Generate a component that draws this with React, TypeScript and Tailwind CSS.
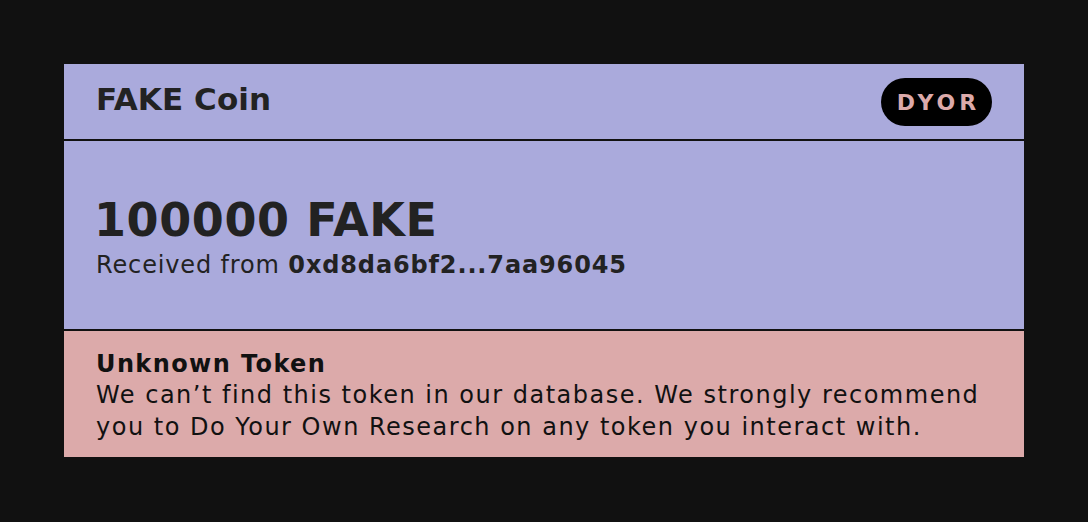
import React from "react";

const font = { fontFamily: "'DejaVu Sans', sans-serif" };

export default function App() {
  return (
    <div className="w-[1088px] h-[522px] bg-[#111111] flex items-start justify-center pt-[64px]" style={font}>
      <div className="w-[960px] flex flex-col">
        <div className="h-[77px] bg-[#aaaadc] flex items-center justify-between px-8 border-b-2 border-[#111111]">
          <span className="text-[31px] font-bold text-[#222222] mb-[5px] tracking-[0.1px]">FAKE Coin</span>
          <span className="h-[48px] w-[111px] rounded-full bg-black text-[#dcaaaa] text-[22px] font-bold flex items-center justify-center tracking-[4px] pl-[4px] pt-[2px]">DYOR</span>
        </div>
        <div className="h-[190px] bg-[#aaaadc] flex flex-col px-8 pt-[53px] border-b-2 border-[#111111]">
          <div className="text-[46px] leading-[52px] font-bold text-[#222222] -ml-[2px] tracking-[0.6px] whitespace-nowrap">100000 FAKE</div>
          <div className="text-[24px] leading-[30px] mt-[4px] text-[#222222] tracking-[0.86px] whitespace-nowrap">
            Received from <span className="font-bold">0xd8da6bf2...7aa96045</span>
          </div>
        </div>
        <div className="h-[126px] bg-[#dcaaaa] px-8 pt-[18px] text-[#111111] whitespace-nowrap">
          <div className="text-[24px] leading-[30px] font-bold tracking-[1.4px]">Unknown Token</div>
          <div className="text-[24px] leading-[32px] tracking-[1.5px]">
            We can’t find this token in our database. We strongly recommend
            <br />
            you to Do Your Own Research on any token you interact with.
          </div>
        </div>
      </div>
    </div>
  );
}
